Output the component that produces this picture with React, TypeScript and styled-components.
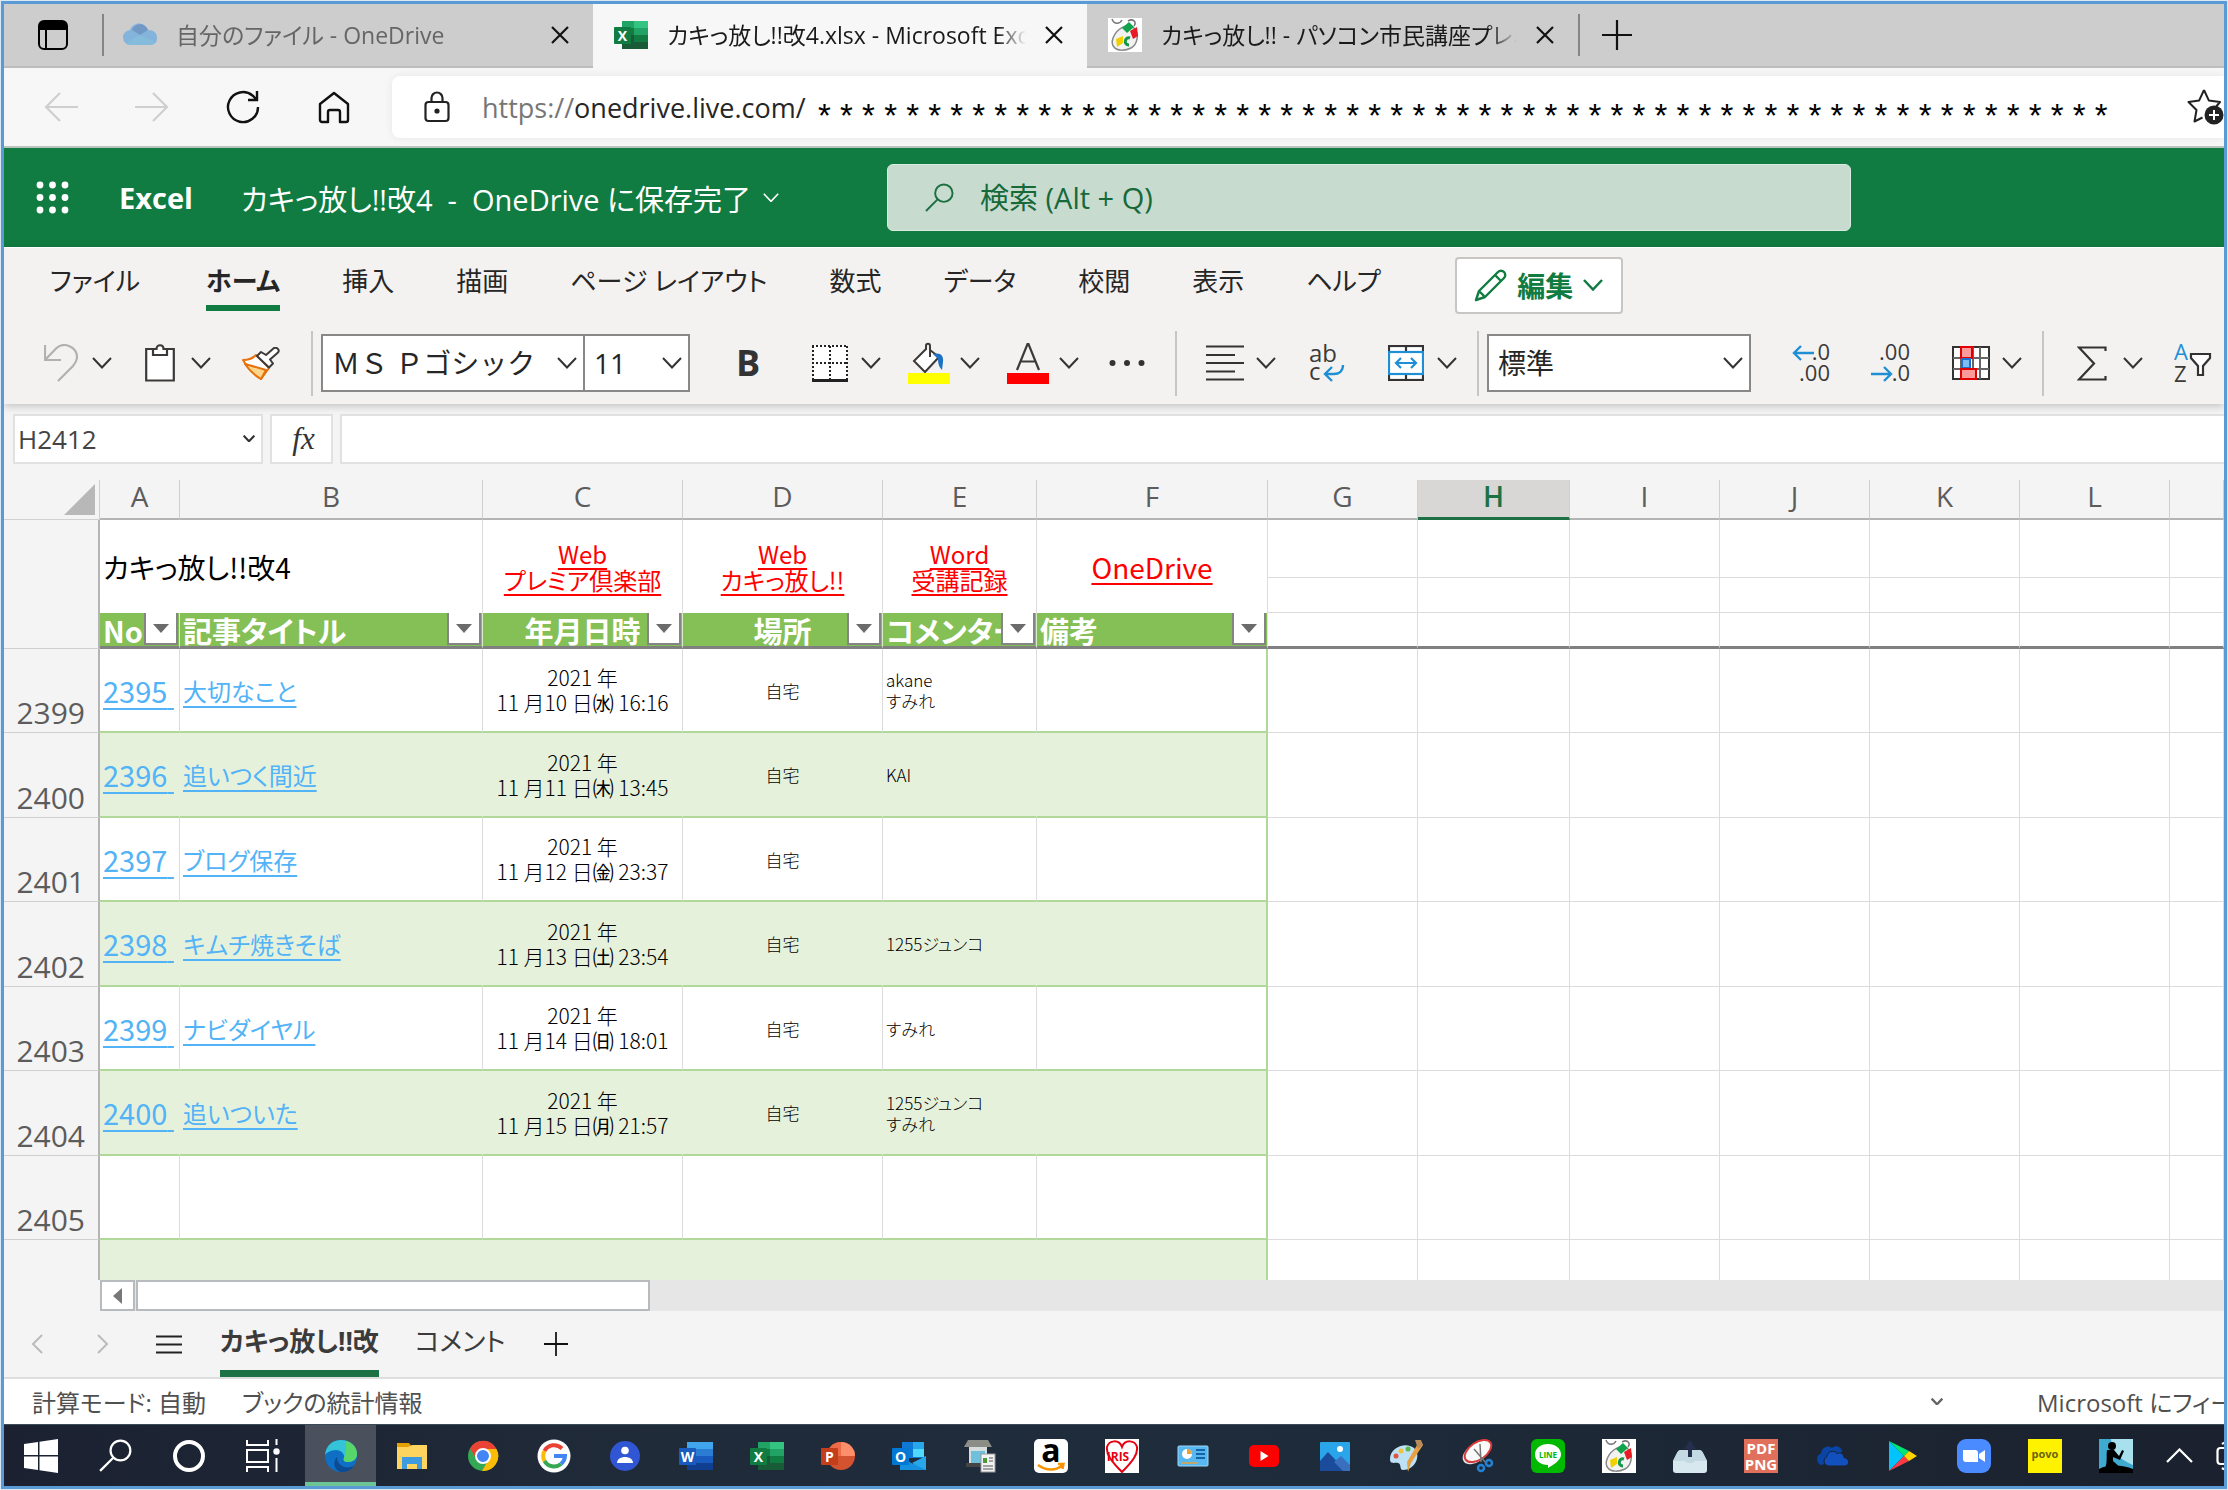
import React from "react";
import styled, { createGlobalStyle, css } from "styled-components";

const uiFont = `"Open Sans", "Noto Sans CJK JP", sans-serif`;
const cellFont = `"Noto Sans CJK JP", "Open Sans", sans-serif`;

const color = {
  frame: "#5b9bd5",
  excel: "#107c41",
  sheetGreen: "#1e7145",
  ribbon: "#f3f2f1",
  chrome: "#f4f4f4",
  head: "#85c056",
  band: "#e6f1db",
  bandLine: "#b0d898",
  grid: "#dcdcdc",
  freeze: "#808080",
  ink: "#262626",
  sub: "#5c5c5c",
  blue: "#1e8fd5",
};

const GlobalStyle = createGlobalStyle`
  *, *::before, *::after { box-sizing: border-box; }
  body { margin: 0; background: #dce9f5; font-family: ${uiFont}; color: ${color.ink}; }
  button, input, select { font: inherit; color: inherit; font-feature-settings: inherit; }
  button { margin: 0; padding: 0; border: 0; background: none; cursor: pointer; }
  svg { display: block; flex: none; }
`;

const Screen = styled.div`
  height: 100vh;
  padding: 1px;
`;

const Window = styled.div`
  height: 100%;
  display: flex;
  flex-direction: column;
  overflow: hidden;
  border: 3px solid ${color.frame};
  background: ${color.chrome};
  font-feature-settings: "palt";
  white-space: nowrap;
`;

/* ---------- browser tabs ---------- */

const TabStrip = styled.div`
  flex: none;
  height: 64px;
  display: flex;
  background: #f7f7f7;
`;

const TabActions = styled.div`
  width: 98px;
  display: flex;
  align-items: center;
  justify-content: center;
  background: #cdcdcd;
  border-bottom: 2px solid #bdbdbd;
`;

const BrowserTab = styled.div<{ $active?: boolean; $width: number }>`
  width: ${(p) => p.$width}px;
  display: flex;
  align-items: center;
  gap: 19px;
  padding: 0 24px 0 21px;
  font-size: 23px;
  background: ${(p) => (p.$active ? "#f7f7f7" : "#cdcdcd")};
  border-bottom: 2px solid ${(p) => (p.$active ? "#f7f7f7" : "#bdbdbd")};
`;

const TabLabel = styled.button<{ $muted?: boolean }>`
  flex: 1;
  overflow: hidden;
  text-align: left;
  line-height: 40px;
  color: ${(p) => (p.$muted ? "#666" : "#1a1a1a")};
  mask-image: linear-gradient(to right, #000 92%, transparent);
`;

const Rule = styled.div<{ $h: number; $before?: number; $after?: number }>`
  flex: none;
  align-self: center;
  width: 2px;
  height: ${(p) => p.$h}px;
  margin-left: ${(p) => p.$before ?? 0}px;
  margin-right: ${(p) => p.$after ?? 0}px;
  background: ${(p) => (p.$h > 50 ? "#c6c6c6" : "#858585")};
`;

const TabTail = styled.div`
  flex: 1;
  display: flex;
  align-items: center;
  gap: 22px;
  background: #cdcdcd;
  border-bottom: 2px solid #bdbdbd;
`;

/* ---------- address row ---------- */

const AddressRow = styled.div`
  flex: none;
  height: 80px;
  display: flex;
  align-items: center;
  background: #f7f7f7;
  border-bottom: 2px solid #b9c4bd;
  padding-left: 29px;
`;

const NavButtons = styled.div`
  width: 359px;
  display: flex;
  gap: 36px;
`;

const NavButton = styled.button`
  width: 55px;
  height: 44px;
  display: grid;
  place-items: center;
`;

const AddressBox = styled.label`
  flex: 1;
  height: 62px;
  display: flex;
  align-items: center;
  padding-left: 32px;
  border-radius: 8px 0 0 8px;
  background: #fff;
  box-shadow: 0 0 10px rgba(0, 0, 0, 0.07);
  font-size: 27px;
`;

const Scheme = styled.span`
  margin-left: 32px;
  color: #767676;
`;

const AddressInput = styled.input`
  width: 236px;
  padding: 0;
  border: 0;
  outline: 0;
  background: none;
`;

const Mask = styled.span`
  flex: 1;
  padding: 18px 0 0 8px;
  overflow: hidden;
  font-family: "Liberation Sans", sans-serif;
  font-size: 33px;
  line-height: 40px;
  color: #000;
`;

/* ---------- Excel title bar ---------- */

const AppBar = styled.header`
  flex: none;
  height: 99px;
  display: flex;
  align-items: center;
  padding-left: 32px;
  background: ${color.excel};
  color: #fff;
  font-size: 29px;
`;

const Brand = styled.a`
  width: 122px;
  margin-left: 50px;
  font-weight: 700;
  color: #fff;
  text-decoration: none;
`;

const DocTitle = styled.button`
  width: 646px;
  display: flex;
  align-items: center;
  gap: 12px;
`;

const SearchBox = styled.label`
  flex: 0 1 964px;
  height: 67px;
  display: flex;
  align-items: center;
  gap: 26px;
  padding-left: 37px;
  border: 1px solid #dcebe1;
  border-radius: 6px;
  background: #c8dbcf;
`;

const SearchInput = styled.input`
  flex: 1;
  min-width: 0;
  border: 0;
  padding: 0;
  outline: 0;
  background: none;
  &::placeholder {
    color: #17693a;
    opacity: 1;
  }
`;

/* ---------- ribbon ---------- */

const Ribbon = styled.div`
  flex: none;
  height: 157px;
  display: flex;
  flex-direction: column;
  background: ${color.ribbon};
  border-top: 1px solid #fff;
  box-shadow: 0 2px 8px rgba(0, 0, 0, 0.22);
  z-index: 1;
`;

const RibbonTabs = styled.nav`
  height: 74px;
  display: flex;
  align-items: center;
  gap: 62px;
  padding-left: 46px;
  font-size: 26px;
`;

const RibbonTab = styled.button<{ $active?: boolean; $lead?: boolean }>`
  height: 52px;
  line-height: 44px;
  padding-bottom: 2px;
  margin-right: ${(p) => (p.$lead ? 4 : 0)}px;
  border-bottom: 6px solid transparent;
  ${(p) =>
    p.$active &&
    css`
      font-weight: 700;
      border-bottom-color: ${color.excel};
    `}
`;

const EditMode = styled.button`
  width: 168px;
  height: 57px;
  display: flex;
  align-items: center;
  justify-content: center;
  gap: 10px;
  margin-left: 12px;
  border: 2px solid #c8c6c4;
  border-radius: 4px;
  background: #fff;
  color: ${color.excel};
  font-size: 28px;
  font-weight: 700;
`;

const Toolbar = styled.div`
  height: 82px;
  display: flex;
  align-items: center;
  padding-left: 37px;
`;

const ToolGroup = styled.div<{ $gap?: number; $before?: number }>`
  display: flex;
  gap: ${(p) => p.$gap ?? 28}px;
  margin-left: ${(p) => p.$before ?? 0}px;
`;

const ToolButton = styled.button<{ $slot?: number }>`
  flex: none;
  height: 56px;
  display: grid;
  grid-template-columns: ${(p) => p.$slot ?? 40}px;
  grid-auto-columns: 20px;
  grid-auto-flow: column;
  column-gap: 11px;
  place-items: center;
`;

const Picker = styled.div<{ $w: number; $joined?: boolean }>`
  flex: none;
  position: relative;
  width: ${(p) => p.$w}px;
  height: 58px;
  border: 2px solid #8a8886;
  border-left-width: ${(p) => (p.$joined ? 0 : 2)}px;
  background: #fff;
  font-size: 28px;
  font-feature-settings: normal;
  & > select {
    width: 100%;
    height: 100%;
    padding: 0 0 0 9px;
    border: 0;
    outline: 0;
    appearance: none;
    background: none;
  }
  & > svg {
    position: absolute;
    right: 6px;
    top: 21px;
    pointer-events: none;
  }
`;

/* ---------- formula bar ---------- */

const FormulaRow = styled.div`
  flex: none;
  height: 76px;
  display: flex;
  gap: 7px;
  padding: 10px 0 16px 9px;
`;

const NameBox = styled.div`
  position: relative;
  width: 250px;
  border: 2px solid #e1e1e1;
  background: #fff;
  font-size: 26px;
  color: #444;
  & > select {
    width: 100%;
    height: 100%;
    padding: 0 0 0 3px;
    border: 0;
    outline: 0;
    appearance: none;
    background: none;
  }
  & > svg {
    position: absolute;
    right: 6px;
    top: 19px;
    pointer-events: none;
  }
`;

const FxButton = styled.button`
  width: 63px;
  padding-left: 4px;
  border: 2px solid #e1e1e1;
  background: #fff;
  font-family: "Liberation Serif", serif;
  font-size: 31px;
  font-style: italic;
  color: #333;
`;

const FormulaInput = styled.input`
  flex: 1;
  min-width: 0;
  border: 2px solid #e1e1e1;
  border-right: 0;
  outline: 0;
  background: #fff;
`;

/* ---------- grid ---------- */

const GridArea = styled.main`
  flex: 1;
  min-height: 0;
  overflow: hidden;
`;

const Sheet = styled.table`
  width: 100%;
  table-layout: fixed;
  border-collapse: separate;
  border-spacing: 0;
  background: #fff;
  font-family: ${cellFont};
`;

const ColHead = styled.th<{ $active?: boolean }>`
  height: 40px;
  padding: 0;
  vertical-align: top;
  background: ${(p) => (p.$active ? "#d8d7d5" : color.chrome)};
  border-right: 1px solid #d0d0d0;
  border-bottom: ${(p) => (p.$active ? `3px solid ${color.sheetGreen}` : "2px solid #b4b4b4")};
  font: ${(p) => (p.$active ? 600 : 400)} 28px/33px ${uiFont};
  color: ${(p) => (p.$active ? color.sheetGreen : color.sub)};
`;

const Corner = styled.td`
  padding: 0 4px 0 0;
  background: ${color.chrome};
  border-right: 1px solid #d0d0d0;
  border-bottom: 1px solid #d0d0d0;
  & > svg {
    margin-left: auto;
  }
`;

const RowHead = styled.th`
  padding: 0 13px 0 0;
  vertical-align: bottom;
  text-align: right;
  background: ${color.chrome};
  border-right: 2px solid #b4b4b4;
  border-bottom: 1px solid #cfcfcf;
  font: 400 30px/39px ${uiFont};
  color: ${color.sub};
`;

const Row = styled.tr<{ $h: number }>`
  height: ${(p) => p.$h}px;
`;

const Blank = styled.td`
  padding: 0;
  border-right: 1px solid ${color.grid};
  border-bottom: 1px solid ${color.grid};
`;

const FrozenBlank = styled(Blank)`
  border-bottom: 3px solid ${color.freeze};
`;

const TitleCell = styled.td`
  padding: 0 3px;
  border-right: 1px solid ${color.grid};
  font-size: 28px;
  line-height: 36px;
  color: #000;
`;

const LinkCell = styled.td<{ $size: number }>`
  padding: 0;
  border-right: 1px solid ${color.grid};
  text-align: center;
  font-size: ${(p) => p.$size}px;
  line-height: 26px;
`;

const RedLink = styled.a`
  color: #f00;
  text-decoration: underline 2px;
  text-underline-offset: 4px;
`;

const FieldHead = styled.th<{ $center?: boolean }>`
  position: relative;
  padding: 0 3px;
  overflow: hidden;
  background: ${color.head};
  border-right: 1px solid #d9ecca;
  border-bottom: 3px solid ${color.freeze};
  text-align: ${(p) => (p.$center ? "center" : "left")};
  font-size: 29px;
  line-height: 32px;
  font-weight: 700;
  color: #fff;
`;

const FilterButton = styled.button`
  position: absolute;
  top: 0;
  right: 1px;
  width: 34px;
  height: 32px;
  display: grid;
  place-items: center;
  background: #fff;
  border: 2px solid #858585;
  border-top: 0;
`;

const Cell = styled.td<{ $band?: boolean; $last?: boolean; $center?: boolean; $size?: number }>`
  padding: 0 3px;
  overflow: hidden;
  background: ${(p) => (p.$band ? color.band : "#fff")};
  border-bottom: 2px solid ${color.bandLine};
  border-right: ${(p) =>
    p.$last ? `2px solid ${color.bandLine}` : `1px solid ${p.$band ? color.band : color.grid}`};
  text-align: ${(p) => (p.$center ? "center" : "left")};
  font-size: ${(p) => p.$size ?? 17}px;
  line-height: ${(p) => (p.$size ? 25 : 21)}px;
  font-weight: 300;
  color: #000;
`;

const BlueLink = styled.a`
  font-weight: 400;
  color: #52b3f7;
  text-decoration: underline 2px;
  text-underline-offset: 5px;
`;

/* ---------- bottom bars ---------- */

const ScrollRow = styled.div`
  flex: none;
  height: 31px;
  display: flex;
  gap: 1px;
  margin-left: 96px;
  background: #e6e6e6;
`;

const ScrollArrow = styled.button`
  width: 35px;
  display: grid;
  place-items: center;
  border: 2px solid #b8bbbe;
  background: #fff;
`;

const ScrollThumb = styled.div`
  width: 24.2%;
  border: 2px solid #b8bbbe;
  background: #fff;
`;

const SheetBar = styled.div`
  flex: none;
  height: 68px;
  display: flex;
  align-items: stretch;
  border-bottom: 2px solid #dedede;
  font-size: 26px;
  color: #3b3b3b;
`;

const SheetNav = styled.button`
  width: 66px;
  display: grid;
  place-items: center;
`;

const SheetTab = styled.button<{ $active?: boolean }>`
  margin: 0 18px;
  line-height: 58px;
  border-bottom: 7px solid ${(p) => (p.$active ? color.sheetGreen : "transparent")};
  font-weight: ${(p) => (p.$active ? 700 : 400)};
`;

const StatusBar = styled.footer`
  flex: none;
  height: 45px;
  display: flex;
  align-items: center;
  padding-left: 28px;
  background: #fff;
  font-size: 24px;
  color: #505050;
`;

const StatusItem = styled.span`
  margin-right: 36px;
`;

const StatusMenu = styled.button`
  margin-left: auto;
  width: 28px;
  display: grid;
  place-items: center;
`;

const Feedback = styled.button`
  width: 187px;
  margin-left: 86px;
  overflow: hidden;
  text-align: left;
`;

const Taskbar = styled.nav`
  flex: none;
  height: 62px;
  display: flex;
  overflow: hidden;
  background: linear-gradient(90deg, #1b2130, #202b3a 30%, #1e2c3b 55%, #1b212e);
  border-top: 1px solid #3a4a58;
`;

const TaskButton = styled.button<{ $w?: number; $running?: boolean }>`
  flex: none;
  width: ${(p) => p.$w ?? 71}px;
  display: grid;
  place-items: center;
  background: ${(p) => (p.$running ? "#4a515d" : "none")};
  border-top: ${(p) => (p.$running ? 4 : 0)}px solid transparent;
  border-bottom: ${(p) => (p.$running ? 4 : 0)}px solid #6cc595;
`;

const SystemGroup = styled.div`
  flex: none;
  display: flex;
  margin-right: 5px;
`;

/* ---------- line icons ---------- */

const Chevron = ({ w = 20, stroke = "#333", sw = 2 }: { w?: number; stroke?: string; sw?: number }) => (
  <svg width={w} height={w * 0.6} viewBox="0 0 20 12" fill="none" stroke={stroke} strokeWidth={sw}>
    <path d="M1 1l9 9.5L19 1" />
  </svg>
);

const CloseIcon = () => (
  <svg width="18" height="18" viewBox="0 0 18 18" stroke="#111" strokeWidth="2.2">
    <path d="M1 1l16 16M17 1L1 17" />
  </svg>
);

const PlusIcon = ({ size = 30 }: { size?: number }) => (
  <svg width={size} height={size} viewBox="0 0 30 30" stroke="#111" strokeWidth="2.2">
    <path d="M15 0v30M0 15h30" />
  </svg>
);

const TabMenuIcon = () => (
  <svg width="30" height="30" viewBox="0 0 30 30" fill="none" stroke="#000" strokeWidth="2">
    <rect x="1" y="1" width="28" height="28" rx="5" />
    <path d="M2 6a4 4 0 014-4h18a4 4 0 014 4v3H2z" fill="#000" />
    <path d="M8 9v20" />
  </svg>
);

const BackIcon = ({ flip }: { flip?: boolean }) => (
  <svg width="34" height="30" viewBox="0 0 34 30" fill="none" stroke="#cfcfcf" strokeWidth="2.2">
    <path d={flip ? "M0 15h32M18 1l14 14-14 14" : "M34 15H2M16 1L2 15l14 14"} />
  </svg>
);

const ReloadIcon = () => (
  <svg width="34" height="34" viewBox="0 0 34 34" fill="none" stroke="#111" strokeWidth="2.4">
    <path d="M32 17A15 15 0 1 1 26.500 5.500L30.500 9.500M31 1v9h-9" />
  </svg>
);

const HomeIcon = () => (
  <svg width="32" height="33" viewBox="0 0 32 33" fill="none" stroke="#111" strokeWidth="2.4" strokeLinejoin="round">
    <path d="M2 13L16 2l14 11v16a2 2 0 01-2 2h-6V21a2 2 0 00-2-2h-8a2 2 0 00-2 2v10H4a2 2 0 01-2-2z" />
  </svg>
);

const LockIcon = () => (
  <svg width="26" height="32" viewBox="0 0 26 32" fill="none" stroke="#222" strokeWidth="2.2">
    <rect x="1.500" y="11" width="23" height="19" rx="3" />
    <path d="M7.500 11V7a5.500 5.500 0 0111 0v4" />
    <circle cx="13" cy="20" r="1.500" fill="#222" />
  </svg>
);

const StarIcon = () => (
  <svg width="37" height="38" viewBox="0 0 37 38" fill="none" stroke="#222" strokeWidth="2">
    <path d="M17 2l4.800 10.400L33 14l-5 6M17 2l-4.800 10.400L1.500 14l8 8-2 11.500 8-4" strokeLinejoin="round" />
    <circle cx="27" cy="27" r="9.500" fill="#222" stroke="none" />
    <path d="M27 22v10M22 27h10" stroke="#fff" />
  </svg>
);

const WaffleIcon = () => (
  <svg width="33" height="33" viewBox="0 0 33 33" fill="#fff">
    {[4, 16.5, 29].map((y) => [4, 16.5, 29].map((x) => <circle key={`${x}-${y}`} cx={x} cy={y} r="3.400" />))}
  </svg>
);

const SearchIcon = ({ size = 29, stroke = "#1c6f40" }: { size?: number; stroke?: string }) => (
  <svg width={size} height={size} viewBox="0 0 30 30" fill="none" stroke={stroke} strokeWidth="2">
    <circle cx="19.500" cy="10.500" r="9" />
    <path d="M13 17L1 29" />
  </svg>
);

const PencilIcon = () => (
  <svg width="33" height="33" viewBox="0 0 33 33" fill="none" stroke={color.excel} strokeWidth="2.400" strokeLinejoin="round">
    <path d="M2 31l3-9L24 3a4.200 4.200 0 016 6L11 28zM5 22l6 6M21 6l6 6" />
  </svg>
);

const UndoIcon = () => (
  <svg width="34" height="38" viewBox="0 0 34 38" fill="none" stroke="#b3b1af" strokeWidth="2.200">
    <path d="M1 1v15h16M1 16L12 4.500C20-3 33 3 33 13c0 4-2 6.500-4 9L14 37" />
  </svg>
);

const ClipboardIcon = () => (
  <svg width="30" height="38" viewBox="0 0 30 38" fill="#fff" stroke="#3b3a39" strokeWidth="2.200">
    <path d="M1.200 5h27.600v31.500H1.200z" />
    <path d="M8 5h3.500c0-5 7-5 7 0H22v6H8z" />
  </svg>
);

const BrushIcon = () => (
  <svg width="38" height="33" viewBox="0 0 38 33" strokeLinejoin="round" strokeWidth="2">
    <path d="M1 13c6 0 10-2 13-5l13 13c-3 4-5 7-8 11C12 27 5 20 1 13z" fill="#fff" stroke="#e8710a" />
    <path d="M3 17l21 6-5 9C12 28 7 23 3 17z" fill="#fbd68c" stroke="#e8710a" />
    <path d="M15 9l4-4 5 3 8-7c3-1 6 2 4 4.500l-8 7 3 4-4 4z" fill="#fff" stroke="#3b3a39" />
  </svg>
);

const BoldIcon = styled.b`
  font-size: 36px;
  line-height: 44px;
  color: #333;
`;

const BordersIcon = () => (
  <svg width="36" height="37" viewBox="0 0 36 37" fill="none" stroke="#222" strokeWidth="2">
    <path d="M1 0h34v35H1z" fill="#fff" stroke="none" />
    <path d="M0 1h36M0 18h36M1 1v33M18 1v33M35 1v33" strokeDasharray="2 2" />
    <path d="M0 35.500h36" strokeWidth="3" />
  </svg>
);

const FillIcon = () => (
  <svg width="42" height="42" viewBox="0 0 42 42" fill="none" strokeWidth="2">
    <path d="M18 7L6 19l11 11 14-15-9-7" fill="#fff" stroke="#3b3a39" />
    <path d="M22 15V4c0-3-4-3-4 0v4" stroke="#3b3a39" />
    <path d="M25 12c7-2 11 1 10 8l-1 8c-3-3-4-6-4-11z" fill="#1e72c2" />
    <path d="M0 31h42v11H0z" fill="#ff0" />
  </svg>
);

const FontColorIcon = () => (
  <svg width="42" height="42" viewBox="0 0 42 42" fill="none" stroke="#3b3a39" strokeWidth="2.200">
    <path d="M10 28L20.500 2h1L32 28M13.500 19.500h15" />
    <path d="M0 31h42v11H0z" fill="red" stroke="none" />
  </svg>
);

const DotsIcon = () => (
  <svg width="36" height="8" viewBox="0 0 36 8" fill="#333">
    <circle cx="3.500" cy="4" r="3" />
    <circle cx="18" cy="4" r="3" />
    <circle cx="32.500" cy="4" r="3" />
  </svg>
);

const AlignIcon = () => (
  <svg width="38" height="36" viewBox="0 0 38 36" stroke="#333" strokeWidth="2.200">
    <path d="M0 1.500h38M0 10h29M0 18h38M0 26.500h29M0 34.500h38" />
  </svg>
);

const WrapIcon = () => (
  <svg width="44" height="42" viewBox="0 0 44 42" fill="none" fontFamily={uiFont} fontSize="24">
    <text x="0" y="20" fill="#3b3a39">ab</text>
    <text x="0" y="38" fill="#3b3a39">c</text>
    <path d="M34 23c0 6-4 9-9 9h-8M23 25l-7 7 7 7" stroke={color.blue} strokeWidth="2.400" />
  </svg>
);

const MergeIcon = () => (
  <svg width="36" height="36" viewBox="0 0 36 36" fill="none" strokeWidth="2.200">
    <rect x="1" y="1" width="34" height="34" fill="#fff" stroke="#333" />
    <path d="M18 1v6M18 30v5" stroke="#333" />
    <rect x="1" y="7" width="34" height="22" fill="#fff" stroke={color.blue} />
    <path d="M8 18h20M13 13l-5 5 5 5M23 13l5 5-5 5" stroke={color.blue} />
  </svg>
);

const DecimalIcon = ({ less }: { less?: boolean }) => (
  <svg width="40" height="42" viewBox="0 0 40 42" fill="none" fontFamily={uiFont} fontSize="22">
    <text x="39" y="18" textAnchor="end" fill="#3b3a39">{less ? ".00" : ".0"}</text>
    <text x="39" y="39" textAnchor="end" fill="#3b3a39">{less ? ".0" : ".00"}</text>
    <path d={less ? "M0 32h19M13 25l7 7-7 7" : "M23 11H3M10 4l-7 7 7 7"} stroke={color.blue} strokeWidth="2.400" />
  </svg>
);

const CondIcon = () => (
  <svg width="38" height="34" viewBox="0 0 38 34" fill="#fff" stroke="#333" strokeWidth="2">
    <rect x="1" y="1" width="36" height="32" />
    <path d="M1 12h36M1 23h36M9 1v32M21 1v32M28 1v32" stroke="#666" />
    <rect x="9" y="1" width="11" height="11" fill="#ff9a9a" stroke="#e00000" />
    <rect x="10" y="13" width="8" height="9" fill="#7dbcf0" stroke="#1e6fd0" />
    <rect x="9" y="23" width="15" height="10" fill="#ff9a9a" stroke="#e00000" />
  </svg>
);

const SigmaIcon = () => (
  <svg width="30" height="35" viewBox="0 0 30 35" fill="none" stroke="#333" strokeWidth="2.200">
    <path d="M28.500 5V1.500H2L17 17.500 2 33.500h26.500V30" />
  </svg>
);

const SortIcon = () => (
  <svg width="38" height="42" viewBox="0 0 38 42" fill="none" fontFamily={uiFont} fontSize="22">
    <text x="0" y="18" fill={color.blue}>A</text>
    <text x="0" y="40" fill="#3b3a39">Z</text>
    <path d="M17 12h19v4l-7 8v9h-5v-9l-7-8z" fill="#fff" stroke="#333" strokeWidth="2.200" />
  </svg>
);

const Triangle = ({ dir }: { dir: "down" | "left" | "corner" }) => {
  const shape = {
    down: { w: 16, h: 9, d: "M0 0h16L8 9z", f: "#6b6b6b" },
    left: { w: 9, h: 16, d: "M9 0v16L0 8z", f: "#777" },
    corner: { w: 31, h: 31, d: "M31 0v31H0z", f: "#b8b8b8" },
  }[dir];
  return (
    <svg width={shape.w} height={shape.h} viewBox={`0 0 ${shape.w} ${shape.h}`}>
      <path d={shape.d} fill={shape.f} />
    </svg>
  );
};

/* ---------- app icons ---------- */

const Icon = ({ children, size = 34 }: { children: React.ReactNode; size?: number }) => (
  <svg width={size} height={size} viewBox="0 0 34 34" fill="none">
    {children}
  </svg>
);

const glyph = { fontFamily: uiFont, fontWeight: 700, fill: "#fff", textAnchor: "middle" as const };

const ExcelLogo = () => (
  <Icon>
    <path d="M8 3h13v14H8z" fill="#21a366" />
    <path d="M20 3h14v7H20z" fill="#33c481" />
    <path d="M8 10h12v7H8z" fill="#107c41" />
    <path d="M20 10h14v7H20z" fill="#21a366" />
    <path d="M20 17h14v7H20z" fill="#107c41" />
    <path d="M8 17h12v7h14v7H8z" fill="#185c37" />
    <rect x="0" y="9" width="17" height="17" rx="1" fill="#107c41" />
    <text x="8.500" y="22.500" fontSize="14" {...glyph}>X</text>
  </Icon>
);

const WordLogo = () => (
  <Icon>
    <path d="M8 3h26v7H8z" fill="#41a5ee" />
    <path d="M8 10h26v7H8z" fill="#2b7cd3" />
    <path d="M8 17h26v7H8z" fill="#185abd" />
    <path d="M8 24h26v7H8z" fill="#103f91" />
    <rect x="0" y="9" width="17" height="17" rx="1" fill="#185abd" />
    <text x="8.500" y="22.500" fontSize="14" {...glyph}>W</text>
  </Icon>
);

const PowerPointLogo = () => (
  <Icon>
    <circle cx="20" cy="17" r="14" fill="#d35230" />
    <path d="M20 3a14 14 0 0114 14H20z" fill="#ff8f6b" />
    <path d="M20 3v14H6A14 14 0 0120 3z" fill="#ed6c47" />
    <rect x="0" y="9" width="17" height="17" rx="1" fill="#c43e1c" />
    <text x="8.500" y="22.500" fontSize="14" {...glyph}>P</text>
  </Icon>
);

const OutlookLogo = () => (
  <Icon>
    <path d="M10 3h22v16H10z" fill="#0f78d4" />
    <path d="M21 3h11v7H21z" fill="#28a8ea" />
    <path d="M21 10h11v8H21z" fill="#50d9ff" />
    <path d="M8 17l13 8 13-8v14H8z" fill="#1490df" />
    <path d="M34 17v14L20 24z" fill="#28a8ea" />
    <rect x="0" y="9" width="17" height="17" rx="1" fill="#0078d4" />
    <text x="8.500" y="22.500" fontSize="14" {...glyph}>O</text>
  </Icon>
);

const CloudLogo = ({ dark }: { dark?: boolean }) =>
  dark ? (
    <Icon>
      <path d="M7 26a6 6 0 01-1-11.500C6 9 13 5 17 9c4-4 10-1 10 4" fill="#0a45a6" />
      <path d="M13 27a5 5 0 01-1-9.500c0-5 7-7 10-3 4-2 7 1 7 4 6 1 6 8 1 8.500z" fill="#1150bd" stroke="#1b212e" strokeWidth="1" />
    </Icon>
  ) : (
    <Icon>
      <path d="M8 27a7.500 7.500 0 01-1-15c3-8 14-9 18 0 6 0 9 3 9 8s-3 7-7 7z" fill="#84b4dc" />
      <path d="M9 12c4-8 13-7 16 0l-8 5z" fill="#7299c6" />
      <path d="M3 25l14-8 15 7c-1 2-3 3-5 3H8c-2 0-4-1-5-2z" fill="#86bcdb" />
    </Icon>
  );

const PcLogo = () => (
  <Icon>
    <rect width="34" height="34" fill="#fff" />
    <path d="M4 1c2 6 8 5 10 1M20 3c5-3 9 1 6 5" stroke="#777" strokeWidth="1.500" />
    <path d="M5 20C9 10 19 5 26 10c6 6 3 17-3 20-6 3-14 3-17-1-2-2-2-6-1-9z" fill="#f2f2f2" stroke="#888" strokeWidth="1.500" />
    <path d="M14 10l7-6 5 5-7 6z" fill="#12a44c" />
    <path d="M22 13l7-4 1 9-5 3z" fill="#e81c24" />
    <path d="M8 21l7-3v7l-6 4z" fill="#f0d000" />
    <path d="M22 20c-5-2-7 7-1 7" stroke="#13984a" strokeWidth="3" />
  </Icon>
);

const WindowsLogo = () => (
  <Icon>
    <path d="M0 5l14-2v13H0zM15.500 2.800L34 0v16H15.500zM0 17.500h14V31L0 29zM15.500 17.500H34V34l-18.500-2.700z" fill="#fff" />
  </Icon>
);

const CortanaLogo = () => (
  <Icon>
    <circle cx="17" cy="17" r="14" stroke="#fff" strokeWidth="4" />
  </Icon>
);

const TaskViewLogo = () => (
  <Icon>
    <path d="M1 1v5h21V1M1 33v-5h21v5M1 11h21v12H1zM30.500 0v6M30.500 19v14" stroke="#fff" strokeWidth="2" />
    <circle cx="30.500" cy="12.500" r="3.200" fill="#fff" />
  </Icon>
);

const EdgeLogo = () => (
  <Icon>
    <circle cx="17" cy="17" r="16" fill="#0f6fc5" />
    <path d="M1 16C2 6 9 1 17 1c9 0 16 6 16 14 0 5-4 8-9 8-4 0-5-2-4-4 1-4-3-8-8-8-5 0-10 3-11 5z" fill="#34c3d8" />
    <path d="M22 2c7 2 11 7 11 13 0 5-4 8-9 8-4 0-5-2-4-4 3-6 2-12 2-17z" fill="#58d66a" />
    <path d="M13 18c0 8 8 13 17 9-3 4-7 6-12 6-9-1-9-11-5-15z" fill="#0c4a94" />
  </Icon>
);

const FolderLogo = () => (
  <Icon>
    <path d="M2 4h12l3 4H2z" fill="#e8a000" />
    <path d="M2 8h11l4-2h15v24H2z" fill="#ffd45e" />
    <path d="M7 18h20v12h-5v-5H12v5H7z" fill="#3e9be0" />
  </Icon>
);

const ChromeLogo = () => (
  <Icon>
    <circle cx="17" cy="17" r="15" fill="#34a853" />
    <path d="M4 9.500A15 15 0 0130.500 10H17a7 7 0 00-6.500 10z" fill="#ea4335" />
    <path d="M30.500 10A15 15 0 0116 32l7-12a7 7 0 00-2-10z" fill="#fbbc05" />
    <circle cx="17" cy="17" r="7" fill="#4285f4" stroke="#fff" strokeWidth="2" />
  </Icon>
);

const GoogleLogo = () => (
  <Icon>
    <circle cx="17" cy="17" r="16.500" fill="#fff" />
    <path d="M25 9.500A11 11 0 007.500 12" stroke="#ea4335" strokeWidth="4" />
    <path d="M7.500 12a11 11 0 000 10" stroke="#fbbc05" strokeWidth="4" />
    <path d="M7.500 22A11 11 0 0024 25" stroke="#34a853" strokeWidth="4" />
    <path d="M24 25a11 11 0 004-8H17" stroke="#4285f4" strokeWidth="4" />
  </Icon>
);

const PersonLogo = () => (
  <Icon>
    <circle cx="17" cy="17" r="15" fill="#3056d3" />
    <circle cx="17" cy="11.500" r="3.800" fill="#fff" />
    <path d="M9 24c0-8 16-8 16 0z" fill="#fff" />
  </Icon>
);

const ScannerLogo = () => (
  <Icon>
    <path d="M5 1h20l4 7H1z" fill="#8d8d88" />
    <path d="M6 8h18v18H6z" fill="#d7dcdc" />
    <path d="M8 12h14v12H8z" fill="#6fc0dc" />
    <path d="M3 24h22v4H3z" fill="#444" />
    <rect x="18" y="15" width="14" height="18" fill="#f2f2f2" stroke="#999" />
    <path d="M20 19h4v5h-4z" fill="#4a9a3a" />
    <path d="M26 19h4M26 22h4M20 27h10M20 30h10" stroke="#555" />
  </Icon>
);

const AmazonLogo = () => (
  <Icon>
    <rect width="34" height="34" rx="5" fill="#fff" />
    <text x="17" y="23" fontSize="32" {...glyph} fill="#000">a</text>
    <path d="M4 26c8 6 18 6 25 0M24 25l5.500 0-1 5" stroke="#f79400" strokeWidth="2.400" />
  </Icon>
);

const IrisLogo = () => (
  <Icon>
    <rect width="34" height="34" fill="#fff" />
    <path d="M17 33C6 22 1 15 2 8c2-7 12-8 15 0 3-8 13-7 15 0 1 7-4 14-15 25z" stroke="#e60012" strokeWidth="2" />
    <text x="13" y="22" fontSize="12" {...glyph} fill="#e60012">IRIS</text>
  </Icon>
);

const ControlLogo = () => (
  <Icon>
    <rect x="2" y="7" width="30" height="20" rx="1" fill="#58b7ef" stroke="#9bd7f7" />
    <circle cx="11" cy="15" r="5" fill="#fff" />
    <path d="M11 15v-5a5 5 0 015 5z" fill="#e9a13b" />
    <path d="M20 11h9M20 15h9M20 19h9" stroke="#1664a8" strokeWidth="2" />
    <path d="M5 24h17" stroke="#e9a13b" strokeWidth="1.500" />
  </Icon>
);

const YouTubeLogo = () => (
  <Icon>
    <rect x="2" y="6" width="30" height="22" rx="5" fill="red" />
    <path d="M13.500 12v10l8-5z" fill="#fff" />
  </Icon>
);

const PhotosLogo = () => (
  <Icon>
    <rect x="2" y="3" width="30" height="29" rx="1" fill="#2aa5ea" />
    <path d="M2 22l8-9 18 19H2z" fill="#1b4b9b" />
    <path d="M16 23l7-6 9 9v6H25z" fill="#3a6fc0" />
    <circle cx="22" cy="10" r="3" fill="#fff" />
  </Icon>
);

const PaintLogo = () => (
  <Icon>
    <path d="M1 20C1 8 18 2 26 10c6 7 0 21-12 21-4 0-1-6-5-7-3-1-8 2-8-4z" fill="#bfe1f5" />
    <circle cx="7" cy="17" r="2.500" fill="#e0533c" />
    <circle cx="12" cy="12" r="2.500" fill="#f3c23c" />
    <circle cx="19" cy="10" r="2.500" fill="#5bb84c" />
    <path d="M31 1l3 5-12 18-3 9-1-10z" fill="#e8a040" />
    <path d="M26 1h6l2 5-5 4z" fill="#b98a5a" />
  </Icon>
);

const SnipLogo = () => (
  <Icon>
    <ellipse cx="16" cy="14" rx="15" ry="9" transform="rotate(-35 16 14)" fill="#e3e6e8" />
    <ellipse cx="18" cy="12" rx="15" ry="8.500" transform="rotate(-35 18 12)" fill="#fafafa" stroke="#d93a3a" strokeWidth="2" />
    <path d="M14 10l12 14M20 5l1 18" stroke="#777" strokeWidth="1.500" />
    <circle cx="21" cy="29" r="3" stroke="#2382d4" strokeWidth="2.500" />
    <circle cx="29" cy="24" r="3" stroke="#2382d4" strokeWidth="2.500" />
  </Icon>
);

const LineLogo = () => (
  <Icon>
    <rect width="34" height="34" rx="6" fill="#00b900" />
    <path d="M17 5c7.500 0 13 4.500 13 10.500S22 26 17 29v-3C9.500 26 4 21.500 4 15.500S9.500 5 17 5z" fill="#fff" />
    <text x="17" y="18.500" fontSize="8" {...glyph} fill="#00b900">LINE</text>
  </Icon>
);

const TrayLogo = () => (
  <Icon>
    <path d="M0 22l4-8c1-2 2-3 4-3h18c2 0 3 1 4 3l4 8v9c0 2-1 3-3 3H3c-2 0-3-1-3-3z" fill="#d7e8ef" />
    <path d="M4 14c1-2 2-3 4-3h18c2 0 3 1 4 3l4 8H22c-2 3-8 3-10 0H0z" fill="#c3dae4" />
    <path d="M17 1l6 9h-4v8h-4v-8h-4z" fill="#232f4d" />
  </Icon>
);

const PdfLogo = () => (
  <Icon>
    <rect width="34" height="34" fill="#e0705c" />
    <text x="17" y="15" fontSize="15" {...glyph}>PDF</text>
    <text x="17" y="31" fontSize="15" {...glyph}>PNG</text>
  </Icon>
);

const PlayLogo = () => (
  <Icon>
    <path d="M3 2v30l15-15z" fill="#00c3ff" />
    <path d="M3 2l15 15 5-5z" fill="#00e676" />
    <path d="M3 32l15-15 5 5z" fill="#ff3a44" />
    <path d="M23 12l8 5-8 5-5-5z" fill="#ffd400" />
  </Icon>
);

const ZoomLogo = () => (
  <Icon>
    <rect width="34" height="34" rx="9" fill="#4a8cff" />
    <path d="M6 11h12a3 3 0 013 3v9H9a3 3 0 01-3-3zM22 15l6-4v12l-6-4z" fill="#fff" />
  </Icon>
);

const PovoLogo = () => (
  <Icon>
    <rect width="34" height="34" fill="#fff200" />
    <text x="17" y="19" fontSize="11" {...glyph} fill="#6b6410">povo</text>
  </Icon>
);

const KindleLogo = () => (
  <Icon>
    <rect width="34" height="34" fill="#3fa9d0" />
    <path d="M12 0h22v26c-8-4-20-8-22-26z" fill="#a8e0ee" />
    <circle cx="13" cy="7" r="4" fill="#000" />
    <path d="M8 11h7l5 6 3-6 2 1-4 9-7-3v4l9 8H5c4-4 2-12 3-19zM0 30c10-5 24-4 34 0v4H0z" fill="#000" />
  </Icon>
);

/* ---------- data ---------- */

const ribbonTabs = ["ファイル", "ホーム", "挿入", "描画", "ページ レイアウト", "数式", "データ", "校閲", "表示", "ヘルプ"];

const columns = [
  ["A", 80],
  ["B", 303],
  ["C", 200],
  ["D", 200],
  ["E", 154],
  ["F", 231],
  ["G", 150],
  ["H", 152],
  ["I", 150],
  ["J", 150],
  ["K", 150],
  ["L", 150],
] as const;

const blanks = ["G", "H", "I", "J", "K", "L", "M"];

const links = [
  { lines: ["Web", "プレミア倶楽部"], size: 24 },
  { lines: ["Web", "カキっ放し!!"], size: 24 },
  { lines: ["Word", "受講記録"], size: 24 },
  { lines: ["OneDrive"], size: 28 },
];

const fields = [
  { name: "No" },
  { name: "記事タイトル" },
  { name: "年月日時", center: true },
  { name: "場所", center: true },
  { name: "コメンター" },
  { name: "備考" },
];

const posts = [
  { row: 2399, no: 2395, title: "大切なこと", day: "11 月10 日", wd: "㈬", time: "16:16", who: ["akane", "すみれ"] },
  { row: 2400, no: 2396, title: "追いつく間近", day: "11 月11 日", wd: "㈭", time: "13:45", who: ["KAI"] },
  { row: 2401, no: 2397, title: "ブログ保存", day: "11 月12 日", wd: "㈮", time: "23:37", who: [] },
  { row: 2402, no: 2398, title: "キムチ焼きそば", day: "11 月13 日", wd: "㈯", time: "23:54", who: ["1255ジュンコ"] },
  { row: 2403, no: 2399, title: "ナビダイヤル", day: "11 月14 日", wd: "㈰", time: "18:01", who: ["すみれ"] },
  { row: 2404, no: 2400, title: "追いついた", day: "11 月15 日", wd: "㈪", time: "21:57", who: ["1255ジュンコ", "すみれ"] },
];

const apps: [string, React.ComponentType][] = [
  ["Edge", EdgeLogo],
  ["エクスプローラー", FolderLogo],
  ["Chrome", ChromeLogo],
  ["Google", GoogleLogo],
  ["アカウント", PersonLogo],
  ["Word", WordLogo],
  ["Excel", ExcelLogo],
  ["PowerPoint", PowerPointLogo],
  ["Outlook", OutlookLogo],
  ["スキャナー", ScannerLogo],
  ["Amazon", AmazonLogo],
  ["IRIS", IrisLogo],
  ["コントロール パネル", ControlLogo],
  ["YouTube", YouTubeLogo],
  ["フォト", PhotosLogo],
  ["ペイント", PaintLogo],
  ["Snipping Tool", SnipLogo],
  ["LINE", LineLogo],
  ["プレミア倶楽部", PcLogo],
  ["アップロード", TrayLogo],
  ["PDF PNG", PdfLogo],
  ["OneDrive", () => <CloudLogo dark />],
  ["Google Play", PlayLogo],
  ["Zoom", ZoomLogo],
  ["povo", PovoLogo],
  ["Kindle", KindleLogo],
];

const Lines = ({ items }: { items: string[] }) => (
  <>
    {items.map((t, i) => (
      <React.Fragment key={t}>
        {i > 0 && <br />}
        {t}
      </React.Fragment>
    ))}
  </>
);

const Tool = ({ label, icon, menu, slot }: { label: string; icon: React.ReactNode; menu?: boolean; slot?: number }) => (
  <ToolButton aria-label={label} $slot={slot}>
    {icon}
    {menu && <Chevron />}
  </ToolButton>
);

const BlankCells = ({ frozen }: { frozen?: boolean }) => (
  <>{blanks.map((c) => (frozen ? <FrozenBlank key={c} /> : <Blank key={c} />))}</>
);

export default function App() {
  return (
    <Screen>
      <GlobalStyle />
      <Window>
        <TabStrip>
          <TabActions>
            <button aria-label="タブ操作">
              <TabMenuIcon />
            </button>
          </TabActions>
          <BrowserTab $width={491}>
            <Rule $h={42} $before={-21} />
            <CloudLogo />
            <TabLabel $muted>自分のファイル - OneDrive</TabLabel>
            <button aria-label="閉じる"><CloseIcon /></button>
          </BrowserTab>
          <BrowserTab $active $width={494}>
            <ExcelLogo />
            <TabLabel>カキっ放し!!改4.xlsx - Microsoft Excel Online</TabLabel>
            <button aria-label="閉じる"><CloseIcon /></button>
          </BrowserTab>
          <BrowserTab $width={491}>
            <PcLogo />
            <TabLabel>カキっ放し!! - パソコン市民講座プレミア倶楽部</TabLabel>
            <button aria-label="閉じる"><CloseIcon /></button>
          </BrowserTab>
          <TabTail>
            <Rule $h={42} />
            <button aria-label="新しいタブ"><PlusIcon /></button>
          </TabTail>
        </TabStrip>

        <AddressRow>
          <NavButtons>
            <NavButton aria-label="戻る"><BackIcon /></NavButton>
            <NavButton aria-label="進む"><BackIcon flip /></NavButton>
            <NavButton aria-label="更新"><ReloadIcon /></NavButton>
            <NavButton aria-label="ホーム"><HomeIcon /></NavButton>
          </NavButtons>
          <AddressBox>
            <LockIcon />
            <Scheme>https://</Scheme>
            <AddressInput aria-label="アドレス" defaultValue="onedrive.live.com/" />
            <Mask>{"* ".repeat(59)}</Mask>
            <button aria-label="お気に入り"><StarIcon /></button>
          </AddressBox>
        </AddressRow>

        <AppBar>
          <button aria-label="アプリ起動ツール"><WaffleIcon /></button>
          <Brand href="#excel">Excel</Brand>
          <DocTitle>
            カキっ放し!!改4&nbsp; - &nbsp;OneDrive に保存完了
            <Chevron w={16} stroke="#fff" />
          </DocTitle>
          <SearchBox>
            <SearchIcon />
            <SearchInput aria-label="検索" placeholder="検索 (Alt + Q)" />
          </SearchBox>
        </AppBar>

        <Ribbon>
          <RibbonTabs>
            {ribbonTabs.map((t, i) => (
              <RibbonTab key={t} $active={i === 1} $lead={i === 0}>{t}</RibbonTab>
            ))}
            <EditMode>
              <PencilIcon />
              編集
              <Chevron stroke={color.excel} sw={2.5} />
            </EditMode>
          </RibbonTabs>
          <Toolbar>
            <ToolGroup>
              <Tool label="元に戻す" icon={<UndoIcon />} menu />
              <Tool label="貼り付け" icon={<ClipboardIcon />} menu />
              <Tool label="書式のコピー" icon={<BrushIcon />} slot={44} />
            </ToolGroup>
            <Rule $h={65} $before={28} $after={8} />
            <Picker $w={264}>
              <select aria-label="フォント"><option>ＭＳ Ｐゴシック</option></select>
              <Chevron />
            </Picker>
            <Picker $w={105} $joined>
              <select aria-label="フォント サイズ"><option>11</option></select>
              <Chevron />
            </Picker>
            <ToolGroup $before={24}>
              <Tool label="太字" icon={<BoldIcon>B</BoldIcon>} slot={68} />
              <Tool label="罫線" icon={<BordersIcon />} menu />
              <Tool label="塗りつぶしの色" icon={<FillIcon />} menu />
              <Tool label="フォントの色" icon={<FontColorIcon />} menu />
              <Tool label="その他" icon={<DotsIcon />} />
            </ToolGroup>
            <Rule $h={65} $before={28} $after={28} />
            <ToolGroup>
              <Tool label="配置" icon={<AlignIcon />} menu />
              <Tool label="折り返して全体を表示" icon={<WrapIcon />} slot={54} />
              <Tool label="セルを結合" icon={<MergeIcon />} menu />
            </ToolGroup>
            <Rule $h={65} $before={20} $after={8} />
            <Picker $w={264}>
              <select aria-label="表示形式"><option>標準</option></select>
              <Chevron />
            </Picker>
            <ToolGroup $gap={40} $before={40}>
              <Tool label="小数点以下の表示桁数を増やす" icon={<DecimalIcon />} />
              <Tool label="小数点以下の表示桁数を減らす" icon={<DecimalIcon less />} />
              <Tool label="条件付き書式" icon={<CondIcon />} menu />
            </ToolGroup>
            <Rule $h={65} $before={20} $after={28} />
            <ToolGroup>
              <Tool label="オート SUM" icon={<SigmaIcon />} menu />
              <Tool label="並べ替えとフィルター" icon={<SortIcon />} slot={44} menu />
            </ToolGroup>
          </Toolbar>
        </Ribbon>

        <FormulaRow>
          <NameBox>
            <select aria-label="名前ボックス"><option>H2412</option></select>
            <Chevron w={12} sw={3.5} />
          </NameBox>
          <FxButton>fx</FxButton>
          <FormulaInput aria-label="数式バー" />
        </FormulaRow>

        <GridArea>
          <Sheet>
            <colgroup>
              <col width={96} />
              {columns.map(([c, w]) => <col key={c} width={w} />)}
              <col />
            </colgroup>
            <thead>
              <tr>
                <Corner><Triangle dir="corner" /></Corner>
                {columns.map(([c]) => <ColHead key={c} $active={c === "H"}>{c}</ColHead>)}
                <ColHead />
              </tr>
            </thead>
            <tbody>
              <Row $h={58}>
                <RowHead rowSpan={3} />
                <TitleCell colSpan={2} rowSpan={2}>カキっ放し!!改4</TitleCell>
                {links.map((l, i) => (
                  <LinkCell key={i} rowSpan={2} $size={l.size}>
                    <RedLink href="#link"><Lines items={l.lines} /></RedLink>
                  </LinkCell>
                ))}
                <BlankCells />
              </Row>
              <Row $h={35}>
                <BlankCells />
              </Row>
              <Row $h={36}>
                {fields.map((f) => (
                  <FieldHead key={f.name} $center={f.center}>
                    {f.name}
                    <FilterButton aria-label={`${f.name} フィルター`}><Triangle dir="down" /></FilterButton>
                  </FieldHead>
                ))}
                <BlankCells frozen />
              </Row>
              {posts.map((p, i) => {
                const band = i % 2 === 1;
                return (
                  <Row key={p.row} $h={band ? 85 : 84}>
                    <RowHead>{p.row}</RowHead>
                    <Cell $band={band} $size={29}><BlueLink href="#post">{p.no}&nbsp;</BlueLink></Cell>
                    <Cell $band={band} $size={24}><BlueLink href="#post">{p.title}</BlueLink></Cell>
                    <Cell $band={band} $size={21} $center>
                      2021 年<br />
                      {p.day}<b>{p.wd}</b> {p.time}
                    </Cell>
                    <Cell $band={band} $center>自宅</Cell>
                    <Cell $band={band}><Lines items={p.who} /></Cell>
                    <Cell $band={band} $last />
                    <BlankCells />
                  </Row>
                );
              })}
              <Row $h={84}>
                <RowHead>2405</RowHead>
                {fields.map((f, i) => <Cell key={f.name} $last={i === 5} />)}
                <BlankCells />
              </Row>
              <Row $h={85}>
                <RowHead />
                {fields.map((f, i) => <Cell key={f.name} $band $last={i === 5} />)}
                <BlankCells />
              </Row>
            </tbody>
          </Sheet>
        </GridArea>

        <ScrollRow>
          <ScrollArrow aria-label="左へスクロール"><Triangle dir="left" /></ScrollArrow>
          <ScrollThumb />
        </ScrollRow>

        <SheetBar>
          <SheetNav aria-label="前のシート">
            <svg width="12" height="20" viewBox="0 0 12 20" fill="none" stroke="#bbb" strokeWidth="2"><path d="M11 1L2 10l9 9" /></svg>
          </SheetNav>
          <SheetNav aria-label="次のシート">
            <svg width="12" height="20" viewBox="0 0 12 20" fill="none" stroke="#bbb" strokeWidth="2"><path d="M1 1l9 9-9 9" /></svg>
          </SheetNav>
          <SheetNav aria-label="すべてのシート">
            <svg width="26" height="19" viewBox="0 0 26 19" stroke="#222" strokeWidth="2.200"><path d="M0 1.500h26M0 9.500h26M0 17.500h26" /></svg>
          </SheetNav>
          <SheetTab $active>カキっ放し!!改</SheetTab>
          <SheetTab>コメント</SheetTab>
          <SheetNav aria-label="新しいシート"><PlusIcon size={24} /></SheetNav>
        </SheetBar>

        <StatusBar>
          <StatusItem>計算モード: 自動</StatusItem>
          <StatusItem>ブックの統計情報</StatusItem>
          <StatusMenu aria-label="ステータス メニュー"><Chevron w={12} stroke="#666" sw={4} /></StatusMenu>
          <Feedback>Microsoft にフィードバックを送信</Feedback>
        </StatusBar>

        <Taskbar>
          <SystemGroup>
            <TaskButton $w={74} aria-label="スタート"><WindowsLogo /></TaskButton>
            <TaskButton $w={74} aria-label="検索"><SearchIcon size={33} stroke="#fff" /></TaskButton>
            <TaskButton $w={74} aria-label="Cortana"><CortanaLogo /></TaskButton>
            <TaskButton $w={74} aria-label="タスク ビュー"><TaskViewLogo /></TaskButton>
          </SystemGroup>
          {apps.map(([name, Logo], i) => (
            <TaskButton key={name} $running={i === 0} aria-label={name}><Logo /></TaskButton>
          ))}
          <TaskButton $w={56} aria-label="隠れているインジケーター">
            <svg width="27" height="15" viewBox="0 0 27 15" fill="none" stroke="#fff" strokeWidth="2.200"><path d="M1 14L13.500 1.500 26 14" /></svg>
          </TaskButton>
          <TaskButton $w={48} aria-label="会議">
            <svg width="30" height="30" viewBox="0 0 30 30" fill="none" stroke="#fff" strokeWidth="2.200">
              <rect x="1.500" y="7" width="26" height="16" rx="3" />
              <path d="M6 3c4-3 14-3 18 0M6 27c4 3 14 3 18 0" />
            </svg>
          </TaskButton>
        </Taskbar>
      </Window>
    </Screen>
  );
}
